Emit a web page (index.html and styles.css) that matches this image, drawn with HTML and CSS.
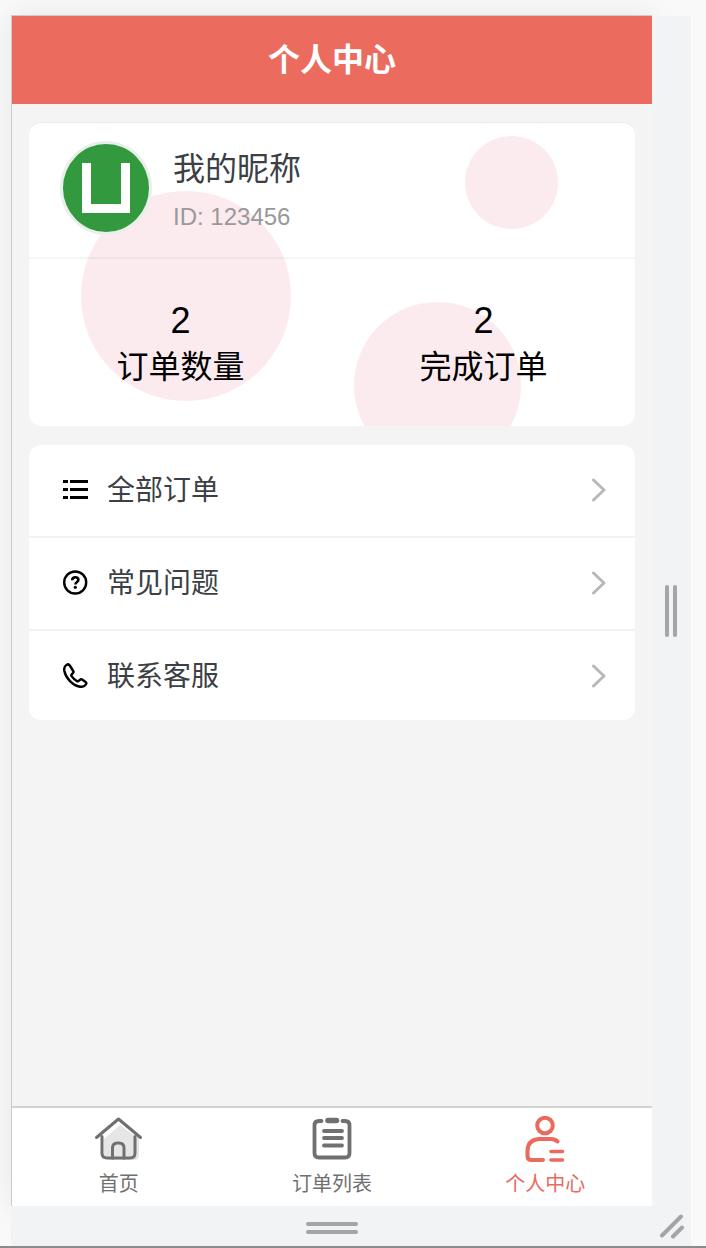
FILE: index.html
```html
<!DOCTYPE html>
<html lang="zh-CN">
<head>
  <meta charset="UTF-8" />
  <title>个人中心</title>
  <meta name="viewport" content="width=device-width, initial-scale=1" />
  <link rel="stylesheet" href="styles.css">
</head>
<body>
  <div class="device">
    <div class="phone">
      <header class="navbar">
        <h1>个人中心</h1>
      </header>

      <main class="content">
        <section class="card profile">
          <span class="bubble bubble-small"></span>
          <span class="bubble bubble-large"></span>
          <span class="bubble bubble-medium"></span>
          <div class="user">
            <div class="avatar">
              <svg width="48" height="50" viewBox="0 0 48 50"><path d="M4.5 0v45.500h39V0" fill="none" stroke="#fff" stroke-width="9"/></svg>
            </div>
            <div class="user-info">
              <div class="nickname">我的昵称</div>
              <div class="user-id">ID: 123456</div>
            </div>
          </div>
          <div class="stats">
            <div class="stat">
              <div class="stat-num">2</div>
              <div class="stat-label">订单数量</div>
            </div>
            <div class="stat">
              <div class="stat-num">2</div>
              <div class="stat-label">完成订单</div>
            </div>
          </div>
        </section>

        <nav class="card menu">
          <a href="#orders" class="menu-item">
            <svg class="menu-icon" viewBox="0 0 26 26" stroke="#000" stroke-width="3"><path d="M0 4.500h5M7 4.500h18M0 12.500h5M7 12.500h18M0 20.500h5M7 20.500h18"/></svg>
            <span class="menu-text">全部订单</span>
            <svg class="arrow" viewBox="0 0 16 24"><path d="M2.500 2L13 12 2.500 22"/></svg>
          </a>
          <a href="#faq" class="menu-item">
            <svg class="menu-icon" viewBox="0 0 26 26" fill="none" stroke="#000" stroke-width="2.400"><circle cx="12.200" cy="12.500" r="11"/><path d="M9.200 10.300c0-4 6.200-3.900 6.200-.500 0 2.200-3 2.200-3 4.700" stroke-width="2.600"/><circle cx="12.300" cy="17.300" r="1.600" fill="#000" stroke="none"/></svg>
            <span class="menu-text">常见问题</span>
            <svg class="arrow" viewBox="0 0 16 24"><path d="M2.500 2L13 12 2.500 22"/></svg>
          </a>
          <a href="#service" class="menu-item">
            <svg class="menu-icon" viewBox="0 0 26 26" fill="none" stroke="#000" stroke-width="2.400" stroke-linejoin="round"><path d="M3.400 1.900C1.600 3.200.9 5.200 1.300 7.700c1.300 7 8 14.600 15.700 16 2.700.4 5-.8 6.100-2.700.4-.8.2-1.600-.5-2l-3.500-2.400c-.8-.5-1.500-.4-2.100.2l-1.600 1.300c-.6.4-1.100.4-1.700 0-1.900-1.300-3.800-3.200-5.100-5-.5-.7-.4-1.200.1-1.700l1.300-1.400c.6-.7.7-1.400.2-2L6.800 2.500c-.9-1.300-2.100-1.400-3.400-.6z"/></svg>
            <span class="menu-text">联系客服</span>
            <svg class="arrow" viewBox="0 0 16 24"><path d="M2.500 2L13 12 2.500 22"/></svg>
          </a>
        </nav>
      </main>

      <nav class="tabbar">
        <a href="#home" class="tab">
          <svg class="tab-icon" viewBox="0 0 48 48" fill="none" stroke="#707070" stroke-width="3" stroke-linecap="round" stroke-linejoin="round">
            <path d="M9 22L25 8l16 12h5l-2 2v16q0 5-5 5H16q-7 0-7-7z" fill="#e6e6e6" stroke="none"/>
            <path d="M1.500 20.500L23.500 2l22 18.500"/>
            <path d="M7 19.500V36q0 5 5 5h23q5 0 5-5V19.500"/>
            <path d="M17.500 41V31q0-5 5-5h1.500q5 0 5 5v10"/>
          </svg>
          <span>首页</span>
        </a>
        <a href="#list" class="tab">
          <svg class="tab-icon" viewBox="0 0 48 48" fill="none" stroke="#707070" stroke-width="3.800" stroke-linecap="round">
            <path d="M13.500 4H11Q6.500 4 6.500 8.500V36q0 4.500 4.500 4.500h26q4.500 0 4.500-4.500V8.500Q41.500 4 37 4h-2.500"/>
            <path d="M20 3.500h8.500" stroke-width="5.500"/>
            <path d="M16 14h18M16 21h18M16 28.500h18"/>
          </svg>
          <span>订单列表</span>
        </a>
        <a href="#mine" class="tab active">
          <svg class="tab-icon" viewBox="0 0 48 48" fill="none" stroke="#ea6a5e" stroke-width="4" stroke-linecap="round">
            <circle cx="24" cy="8.500" r="7.800"/>
            <path d="M36.500 24.500Q34 22 30 22H18Q6.500 23 6.500 34v5q0 4 4 4H22"/>
            <path d="M30 34.500h11.500M30 43h11.500" stroke-width="3.600"/>
          </svg>
          <span>个人中心</span>
        </a>
      </nav>
    </div>

    <div class="rail rail-right"><i></i><i></i></div>
    <div class="rail rail-bottom"><i></i><i></i></div>
    <div class="rail rail-corner">
      <svg width="26" height="26" viewBox="0 0 26 26" stroke="#a5a5a5" stroke-width="4" stroke-linecap="round"><path d="M3 22.500L22 3.500M14 23.500l9-9"/></svg>
    </div>
  </div>
</body>
</html>
```

FILE: styles.css
```css
* {
  box-sizing: border-box;
}
body {
  margin: 0;
  min-height: 100vh;
  display: flex;
  padding: 15px 15px 0 11px;
  background: #f9f9f9;
  border-bottom: 2px solid #8c8c8c;
  font-family: "Liberation Sans", "Noto Sans CJK SC", sans-serif;
  color: #000;
}
a {
  color: inherit;
  text-decoration: none;
}
.device {
  flex: 1;
  display: grid;
  grid-template-columns: 1fr 39px;
  grid-template-rows: 1fr 40px;
}
.phone {
  display: flex;
  flex-direction: column;
  background: #f4f4f4;
  border-top: 1px solid #ccc;
  border-left: 1px solid #ccc;
  box-shadow: 0 0 30px rgba(0, 0, 0, 0.08);
}

/* header */
.navbar {
  height: 88px;
  display: flex;
  align-items: center;
  justify-content: center;
  background: #eb6b5e;
  color: #fff;
}
.navbar h1 {
  margin: 0;
  font-size: 32px;
  line-height: 40px;
  font-weight: 700;
}

.content {
  flex: 1;
  display: flex;
  flex-direction: column;
  gap: 19px;
  padding: 19px 17px;
}
.card {
  background: #fff;
  border-radius: 12px;
  overflow: hidden;
}

/* profile card */
.profile {
  position: relative;
  box-shadow: 0 -1px 1px rgba(0, 0, 0, 0.04);
}
.bubble {
  position: absolute;
  border-radius: 50%;
  background: #fcebee;
}
.bubble-small {
  top: 13px;
  right: 77px;
  width: 93px;
  height: 93px;
}
.bubble-large {
  top: 68px;
  left: 52px;
  width: 210px;
  height: 210px;
}
.bubble-medium {
  top: 179px;
  right: 114px;
  width: 167px;
  height: 167px;
}
.user {
  position: relative;
  display: flex;
  align-items: flex-start;
  gap: 21px;
  padding: 18px 31px 16px;
  border-bottom: 2px solid rgba(0, 0, 0, 0.04);
}
.avatar {
  width: 92px;
  height: 94px;
  display: flex;
  align-items: center;
  justify-content: center;
  background: #33993e;
  border: 3px solid #e9efea;
  border-radius: 50%;
}
.user-info {
  padding-top: 4px;
}
.nickname {
  font-size: 32px;
  line-height: 48px;
  color: #3c3f44;
}
.user-id {
  font-size: 24px;
  line-height: 48px;
  color: #999;
}
.stats {
  position: relative;
  display: flex;
  padding: 40px 0 35px;
}
.stat {
  flex: 1;
  text-align: center;
}
.stat-num {
  font-size: 36px;
  line-height: 44px;
}
.stat-label {
  font-size: 32px;
  line-height: 48px;
}

/* menu */
.menu-item {
  display: flex;
  align-items: center;
  height: 93px;
  padding: 0 28px 2px 34px;
  border-bottom: 2px solid #f2f2f2;
}
.menu-item:last-child {
  height: 89px;
  padding-bottom: 0;
  border-bottom: none;
}
.menu-icon {
  width: 26px;
  height: 26px;
}
.menu-text {
  flex: 1;
  margin-left: 18px;
  padding-top: 2px;
  font-size: 28px;
  line-height: 40px;
  color: #3c3f44;
}
.arrow {
  width: 16px;
  height: 24px;
  fill: none;
  stroke: #b8b8b8;
  stroke-width: 3;
  stroke-linecap: round;
  stroke-linejoin: round;
}

/* bottom tabs */
.tabbar {
  display: flex;
  height: 100px;
  background: #fff;
  border-top: 2px solid #d2d2d2;
}
.tab {
  flex: 1;
  display: flex;
  flex-direction: column;
  align-items: center;
  padding-top: 9px;
  font-size: 20px;
  line-height: 32px;
  color: #707070;
}
.tab.active {
  color: #ea6a5e;
}
.tab-icon {
  width: 48px;
  height: 48px;
  margin-bottom: 3px;
  overflow: visible;
}

/* resize handles around the phone */
.rail {
  display: flex;
  align-items: center;
  justify-content: center;
  gap: 4px;
  background: #f1f3f5;
}
.rail i {
  background: #a5a5a5;
  border-radius: 2px;
}
.rail-right {
  margin-top: 1px;
  padding-right: 1px;
}
.rail-right i {
  width: 4px;
  height: 52px;
}
.rail-bottom {
  flex-direction: column;
  padding-top: 4px;
}
.rail-bottom i {
  width: 52px;
  height: 4px;
}
```
